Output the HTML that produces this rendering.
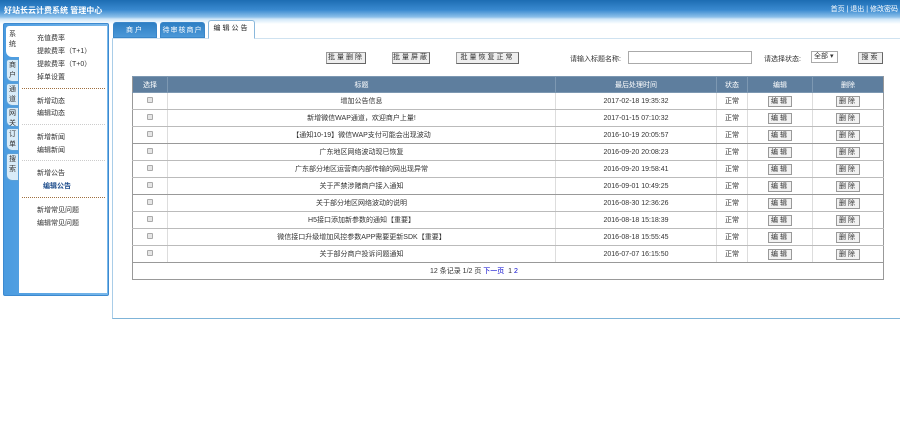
<!DOCTYPE html>
<html><head><meta charset="utf-8"><style>
*{margin:0;padding:0;box-sizing:border-box}
body{width:900px;height:448px;background:#fff;font-family:"Liberation Sans","Noto Sans CJK SC",sans-serif;font-size:7px;color:#333;position:relative;overflow:hidden}
.hd{position:absolute;left:0;top:0;width:900px;height:24px;background:linear-gradient(#1d6db3 0,#3a8ad0 10px,#8cc0ea 17px,#cfe6f8 19px,#fff 24px)}
.hd .t{position:absolute;left:4px;top:5px;color:#fff;font-size:8px;font-weight:bold}
.hd .r{position:absolute;right:2px;top:4px;color:#fff;font-size:7px}
.left{position:absolute;left:3px;top:23px;width:106px;height:273px;background:linear-gradient(90deg,#4a9be0,#7ab8ea);border:1px solid #3d8ad0;border-radius:2px}
.menu{position:absolute;left:15px;top:2px;width:88px;height:267px;background:#fff}
.vt{position:absolute;left:2px;width:13px;background:#d8ebf8;border:1px solid #5aa0d8;border-radius:3px 0 0 6px;font-size:7px;line-height:10px;text-align:center;color:#333;padding-top:1px;overflow:hidden}
.vt.on{background:#fff;border-color:#fff;padding-top:3px}
.menu div{position:absolute;left:18px;white-space:nowrap}
.hr{position:absolute;left:3px!important;width:83px;border-top:1px dotted #a07040}
.tab{position:absolute;top:22px;height:16px;background:linear-gradient(#2e7fc4,#4c99d8);color:#fff;text-align:center;line-height:16px;font-size:7px;border:1px solid #3a86c8;border-radius:3px 3px 0 0;letter-spacing:2px}
.tab.on{background:#fff;color:#222;border-color:#8ab8dc;border-bottom-color:#fff;top:20px;height:19px}
.box{position:absolute;left:112px;top:38px;width:790px;height:281px;border-left:1px solid #a9cde8;border-bottom:1px solid #7fb4d8;border-top:1px solid #cfe2f0}
.btn{position:absolute;top:52px;height:12px;background:#eee;border:1px solid #999;border-right-color:#666;border-bottom-color:#666;font-size:7px;line-height:10px;text-align:center;letter-spacing:2px}
table{position:absolute;left:132px;top:76px;width:752px;border-collapse:collapse}
td,th{border:1px solid #bbb;height:17px;text-align:center;font-size:7px;font-weight:normal;border-left-color:#ddd;border-right-color:#ddd}
td:first-child,th:first-child{border-left-color:#999}
td:last-child,th:last-child{border-right-color:#999}
tr.g td{border-bottom-color:#999}
th{background:#5e7e9e;color:#fff;height:16px;border-color:#7d98b2}
.cb{display:inline-block;width:6px;height:6px;border:1px solid #aaa;background:#e6e6e6;border-radius:1px}
.sb{display:inline-block;width:24px;height:11px;border:1px solid #999;background:#f2f2f2;line-height:9px;letter-spacing:2px}
a{color:#00c}
</style></head><body>
<div class="hd"><div class="t">好站长云计费系统 管理中心</div><div class="r">首页 | 退出 | 修改密码</div></div>
<div class="left">
<div class="vt on" style="top:2px;height:31px">系<br>统</div>
<div class="vt" style="top:35px;height:23px">商<br>户</div>
<div class="vt" style="top:59px;height:23px">通<br>道</div>
<div class="vt" style="top:83px;height:20px">网<br>关</div>
<div class="vt" style="top:104px;height:23px">订<br>单</div>
<div class="vt" style="top:129px;height:28px">搜<br>索</div>
<div class="menu">
<div style="top:7px">充值费率</div>
<div style="top:20px">提款费率（T+1）</div>
<div style="top:33px">提款费率（T+0）</div>
<div style="top:46px">掉单设置</div>
<div class="hr" style="top:62px"></div>
<div style="top:70px">新增动态</div>
<div style="top:82px">编辑动态</div>
<div class="hr" style="top:98px;border-color:#ccc"></div>
<div style="top:106px">新增新闻</div>
<div style="top:119px">编辑新闻</div>
<div class="hr" style="top:134px;border-color:#ccc"></div>
<div style="top:142px">新增公告</div>
<div style="top:155px;left:24px;color:#1a4a8a;font-weight:bold">编辑公告</div>
<div class="hr" style="top:171px"></div>
<div style="top:179px">新增常见问题</div>
<div style="top:192px">编辑常见问题</div>
</div></div>
<div class="tab" style="left:113px;width:44px">商户</div>
<div class="tab" style="left:160px;width:45px;letter-spacing:1px">待审核商户</div>
<div class="box"></div>
<div class="tab on" style="left:208px;width:47px">编辑公告</div>
<div class="btn" style="left:326px;width:40px">批量删除</div>
<div class="btn" style="left:392px;width:38px">批量屏蔽</div>
<div class="btn" style="left:456px;width:63px">批量恢复正常</div>
<div style="position:absolute;left:570px;top:54px">请输入标题名称:</div>
<div style="position:absolute;left:628px;top:51px;width:124px;height:13px;border:1px solid #aaa"></div>
<div style="position:absolute;left:764px;top:54px">请选择状态:</div>
<div style="position:absolute;left:811px;top:51px;width:27px;height:12px;border:1px solid #aaa;padding-left:2px;line-height:10px">全部 ▾</div>
<div class="btn" style="left:858px;width:25px">搜索</div>
<table>
<tr><th style="width:35px">选择</th><th style="width:388px">标题</th><th style="width:161px">最后处理时间</th><th style="width:31px">状态</th><th style="width:65px">编辑</th><th>删除</th></tr>
<tr><td><span class="cb"></span></td><td>增加公告信息</td><td>2017-02-18 19:35:32</td><td>正常</td><td><span class="sb">编辑</span></td><td><span class="sb">删除</span></td></tr>
<tr><td><span class="cb"></span></td><td>新增微信WAP通道，欢迎商户上量!</td><td>2017-01-15 07:10:32</td><td>正常</td><td><span class="sb">编辑</span></td><td><span class="sb">删除</span></td></tr>
<tr class="g"><td><span class="cb"></span></td><td>【通知10-19】微信WAP支付可能会出现波动</td><td>2016-10-19 20:05:57</td><td>正常</td><td><span class="sb">编辑</span></td><td><span class="sb">删除</span></td></tr>
<tr><td><span class="cb"></span></td><td>广东地区网络波动现已恢复</td><td>2016-09-20 20:08:23</td><td>正常</td><td><span class="sb">编辑</span></td><td><span class="sb">删除</span></td></tr>
<tr><td><span class="cb"></span></td><td>广东部分地区运营商内部传输的网出现异常</td><td>2016-09-20 19:58:41</td><td>正常</td><td><span class="sb">编辑</span></td><td><span class="sb">删除</span></td></tr>
<tr class="g"><td><span class="cb"></span></td><td>关于严禁涉赌商户接入通知</td><td>2016-09-01 10:49:25</td><td>正常</td><td><span class="sb">编辑</span></td><td><span class="sb">删除</span></td></tr>
<tr><td><span class="cb"></span></td><td>关于部分地区网络波动的说明</td><td>2016-08-30 12:36:26</td><td>正常</td><td><span class="sb">编辑</span></td><td><span class="sb">删除</span></td></tr>
<tr><td><span class="cb"></span></td><td>H5接口添加新参数的通知【重要】</td><td>2016-08-18 15:18:39</td><td>正常</td><td><span class="sb">编辑</span></td><td><span class="sb">删除</span></td></tr>
<tr><td><span class="cb"></span></td><td>微信接口升级增加风控参数APP需要更新SDK【重要】</td><td>2016-08-18 15:55:45</td><td>正常</td><td><span class="sb">编辑</span></td><td><span class="sb">删除</span></td></tr>
<tr class="g"><td><span class="cb"></span></td><td>关于部分商户投诉问题通知</td><td>2016-07-07 16:15:50</td><td>正常</td><td><span class="sb">编辑</span></td><td><span class="sb">删除</span></td></tr>
<tr class="g"><td colspan="6" style="text-align:left;padding-left:297px">12 条记录 1/2 页 <a>下一页</a> &nbsp;1 <a>2</a></td></tr>
</table>
</body></html>
